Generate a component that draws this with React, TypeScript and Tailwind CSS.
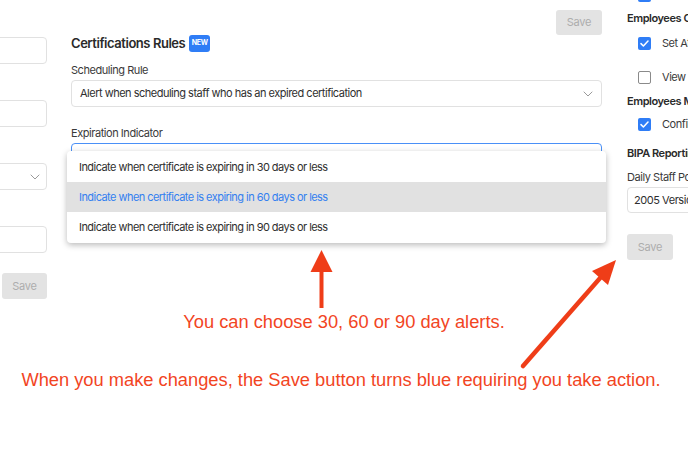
import React from "react";

const Chevron = ({ className = "" }: { className?: string }) => (
  <svg width="10" height="6" viewBox="0 0 10 6" className={className}>
    <polyline points="1,1 5,5 9,1" fill="none" stroke="#9a9a9a" strokeWidth="1" strokeLinecap="round" strokeLinejoin="round" />
  </svg>
);

const Checked = () => (
  <span className="flex h-[13px] w-[13px] shrink-0 items-center justify-center rounded-[2px] bg-[#2f7df6]">
    <svg width="9" height="7" viewBox="0 0 9 7">
      <polyline points="1,3.6 3.4,6 8,1" fill="none" stroke="#fff" strokeWidth="1.5" strokeLinecap="round" strokeLinejoin="round" />
    </svg>
  </span>
);

const Unchecked = () => (
  <span className="block h-[13px] w-[13px] shrink-0 rounded-[2px] border-[1.5px] border-[#8a8a8a] bg-white" />
);

const SaveBtn = ({ className = "" }: { className?: string }) => (
  <div className={"flex items-center justify-center rounded-[3px] bg-[#e3e3e3] text-[11px] tracking-[-0.3px] text-[#adadad] " + className}>
    Save
  </div>
);

export default function App() {
  return (
    <div className="relative h-[469px] w-[688px] overflow-hidden bg-white font-['Inter',sans-serif] tracking-[-0.45px] text-[#2f2f2f]">
      <div className="flex h-[299px]">
        {/* left column (clipped) */}
        <div className="flex w-[47px] shrink-0 flex-col items-end">
          <div className="mt-[37px] h-[27px] w-[200px] shrink-0 rounded-[4px] border border-[#e1e1e1] bg-white" />
          <div className="mt-[36px] h-[27px] w-[200px] shrink-0 rounded-[4px] border border-[#e1e1e1] bg-white" />
          <div className="mt-[36px] flex h-[27px] w-[200px] shrink-0 items-center justify-end rounded-[4px] border border-[#e1e1e1] bg-white pr-[6px]">
            <Chevron />
          </div>
          <div className="mt-[36px] h-[27px] w-[200px] shrink-0 rounded-[4px] border border-[#e1e1e1] bg-white" />
          <SaveBtn className="mt-[20px] h-[26px] w-[45px] shrink-0" />
        </div>

        {/* middle column */}
        <div className="ml-[24px] flex w-[531px] shrink-0 flex-col">
          <SaveBtn className="mt-[10px] h-[25px] w-[46px] self-end" />
          <div className="flex h-[17px] items-center gap-[4px]">
            <span className="text-[13px] font-semibold leading-[17px] text-[#2a2a2a]">Certifications Rules</span>
            <span className="flex h-[17px] w-[21px] items-center justify-center rounded-[3px] bg-[#2f7df6] text-[7px] font-bold tracking-[-0.2px] text-white">
              NEW
            </span>
          </div>
          <div className="mt-[11px] text-[11px] leading-[15px] text-[#3a3a3a]">Scheduling Rule</div>
          <div className="mt-[2px] flex h-[27px] items-center justify-between rounded-[4px] border border-[#e1e1e1] pl-[8px] pr-[8px] text-[11px] tracking-[-0.5px] text-[#2f2f2f]">
            <span>Alert when scheduling staff who has an expired certification</span>
            <Chevron />
          </div>
          <div className="mt-[19px] text-[11px] leading-[15px] text-[#3a3a3a]">Expiration Indicator</div>
          <div className="relative mt-[2px] h-[27px] rounded-[4px] border border-[#4a90f7]">
            <div className="absolute left-[-5px] right-[-5px] top-[7px] z-10 flex flex-col overflow-hidden rounded-[4px] bg-white py-[1px] tracking-[-0.55px] shadow-[0_2px_6px_rgba(0,0,0,0.28)]">
              <div className="flex h-[30px] items-center pl-[12px] text-[11px] text-[#2f2f2f]">
                Indicate when certificate is expiring in 30 days or less
              </div>
              <div className="flex h-[30px] items-center bg-[#e1e1e1] pl-[12px] text-[11px] text-[#3380f0]">
                Indicate when certificate is expiring in 60 days or less
              </div>
              <div className="flex h-[30px] items-center pl-[12px] text-[11px] text-[#2f2f2f]">
                Indicate when certificate is expiring in 90 days or less
              </div>
            </div>
          </div>
        </div>

        {/* right column (clipped) */}
        <div className="ml-[25px] flex w-[220px] shrink-0 flex-col whitespace-nowrap text-[11px]">
          <div className="mt-[-11px] flex h-[13px] items-center gap-[11px] pl-[11px]">
            <Checked />
            <span>Show Overtime</span>
          </div>
          <div className="mt-[9px] text-[11px] font-semibold leading-[15px] text-[#2a2a2a]">Employees Clock-In</div>
          <div className="mt-[11px] flex h-[13px] items-center gap-[11px] pl-[11px]">
            <Checked />
            <span className="text-[#3a3a3a]">Set Attendance Alerts</span>
          </div>
          <div className="mt-[21px] flex h-[13px] items-center gap-[11px] pl-[11px]">
            <Unchecked />
            <span className="text-[#3a3a3a]">View Employee Notes</span>
          </div>
          <div className="mt-[10px] text-[11px] font-semibold leading-[15px] text-[#2a2a2a]">Employees Mobile</div>
          <div className="mt-[9px] flex h-[13px] items-center gap-[11px] pl-[11px]">
            <Checked />
            <span className="text-[#3a3a3a]">Confirm Shifts</span>
          </div>
          <div className="mt-[15px] text-[11px] font-semibold leading-[15px] text-[#2a2a2a]">BIPA Reporting</div>
          <div className="mt-[9px] text-[11px] leading-[15px] text-[#3a3a3a]">Daily Staff Posting</div>
          <div className="mt-[2px] flex h-[26px] items-center rounded-[4px] border border-[#e1e1e1] pl-[6px] text-[#2f2f2f]">
            2005 Version
          </div>
          <SaveBtn className="mt-[21px] h-[26px] w-[46px]" />
        </div>
      </div>

      {/* annotations */}
      <div className="mt-[13px] text-center font-['Liberation_Sans',Arial,sans-serif] text-[18.3px] leading-[20px] tracking-normal text-[#f2451f]">
        You can choose 30, 60 or 90 day alerts.
      </div>
      <div className="mt-[38px] pr-[6px] text-center font-['Liberation_Sans',Arial,sans-serif] text-[18.3px] leading-[20px] tracking-normal text-[#f2451f]">
        When you make changes, the Save button turns blue requiring you take action.
      </div>

      <svg className="pointer-events-none absolute left-0 top-0" width="688" height="469" viewBox="0 0 688 469">
        <line x1="321.5" y1="308" x2="321.5" y2="268" stroke="#ef3d18" strokeWidth="4" />
        <polygon points="321.5,250 310.5,272 332.5,272" fill="#ef3d18" />
        <line x1="523" y1="366" x2="601" y2="277" stroke="#ef3d18" strokeWidth="4.5" strokeLinecap="round" />
        <polygon points="616,260 608,285 592,271" fill="#ef3d18" />
      </svg>
    </div>
  );
}
